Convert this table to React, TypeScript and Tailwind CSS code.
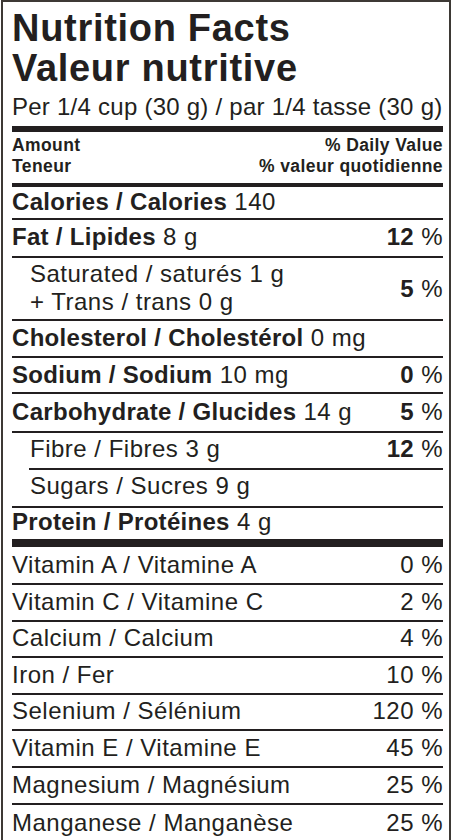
import clsx from 'clsx';

type RowProps = {
  name: string;
  amount?: string;
  dv?: string;
  strong?: boolean;
  dvStrong?: boolean;
  indent?: boolean;
  h: string;
  pb?: string;
};

function Row({ name, amount, dv, strong, dvStrong, indent, h, pb = 'pb-[6px]' }: RowProps) {
  return (
    <div className={clsx('flex items-end justify-between text-[24px] leading-[24px]', h, pb, indent && 'pl-[18px]')}>
      <span className="tracking-[0.5px] whitespace-nowrap">
        {strong ? <span className="font-bold tracking-[0.3px]">{name}</span> : name}
        {amount && ` ${amount}`}
      </span>
      {dv && (
        <span className="tracking-[0.5px] whitespace-nowrap">
          <span className={clsx(dvStrong && 'font-bold tracking-[0.3px]')}>{dv}</span> %
        </span>
      )}
    </div>
  );
}

function Rule({ indent }: { indent?: boolean }) {
  return <div className={clsx('h-[2px] bg-[#231f20]', indent && 'ml-[17px]')} />;
}

const vitamins = [
  { name: 'Vitamin A / Vitamine A', dv: '0', h: 'h-[36px]' },
  { name: 'Vitamin C / Vitamine C', dv: '2', h: 'h-[35px]' },
  { name: 'Calcium / Calcium', dv: '4', h: 'h-[34px]' },
  { name: 'Iron / Fer', dv: '10', h: 'h-[35px]' },
  { name: 'Selenium / Sélénium', dv: '120', h: 'h-[34px]' },
  { name: 'Vitamin E / Vitamine E', dv: '45', h: 'h-[35px]' },
  { name: 'Magnesium / Magnésium', dv: '25', h: 'h-[35px]' },
  { name: 'Manganese / Manganèse', dv: '25', h: 'h-[36px]' },
];

export default function App() {
  return (
    <div className="min-h-[840px] bg-white font-['Liberation_Sans',Arial,sans-serif] text-[#231f20]">
      <div className="ml-px w-[450px] border-2 border-[#3d3935] pl-[9px] pr-[6px]">
        {/* heading */}
        <div className="pt-[6px] text-[38px] leading-[40px] font-bold tracking-[0.7px]">
          <div>Nutrition Facts</div>
          <div>Valeur nutritive</div>
        </div>
        <div className="mt-[5px] text-[24px] leading-[28px] tracking-[0.25px] whitespace-nowrap">
          Per 1/4 cup (30 g) / par 1/4 tasse (30 g)
        </div>
        <div className="mt-[5px] h-[6px] bg-[#231f20]" />

        <div className="mt-[3px] flex justify-between text-[17.5px] leading-[21px] font-bold tracking-[0.4px]">
          <div>
            <div>Amount</div>
            <div>Teneur</div>
          </div>
          <div className="text-right">
            <div>% Daily Value</div>
            <div>% valeur quotidienne</div>
          </div>
        </div>
        <div className="mt-[6px] h-[4px] bg-[#231f20]" />

        <Row name="Calories / Calories" amount="140" strong h="h-[31px]" pb="pb-[4px]" />
        <Rule />
        <Row name="Fat / Lipides" amount="8 g" strong dv="12" dvStrong h="h-[36px]" pb="pb-[7px]" />
        <Rule />
        <div className="flex h-[61px] items-center justify-between pl-[18px] text-[24px]">
          <div className="self-end pb-[3px] leading-[28px] tracking-[0.5px] whitespace-nowrap">
            <div>Saturated / saturés 1 g</div>
            <div>+ Trans / trans 0 g</div>
          </div>
          <span className="leading-[24px] tracking-[0.5px]">
            <span className="font-bold">5</span> %
          </span>
        </div>
        <Rule />
        <Row name="Cholesterol / Cholestérol" amount="0 mg" strong h="h-[35px]" />
        <Rule />
        <Row name="Sodium / Sodium" amount="10 mg" strong dv="0" dvStrong h="h-[34px]" pb="pb-[5px]" />
        <Rule />
        <Row name="Carbohydrate / Glucides" amount="14 g" strong dv="5" dvStrong h="h-[37px]" pb="pb-[7px]" />
        <Rule />
        <Row name="Fibre / Fibres 3 g" dv="12" dvStrong indent h="h-[35px]" pb="pb-[7px]" />
        <Rule indent />
        <Row name="Sugars / Sucres 9 g" indent h="h-[36px]" pb="pb-[8px]" />
        <Rule />
        <Row name="Protein / Protéines" amount="4 g" strong h="h-[31px]" pb="pb-[5px]" />
        <div className="h-[8px] bg-[#231f20]" />

        {vitamins.map((v, i) => (
          <div key={v.name}>
            <Row name={v.name} dv={v.dv} h={v.h} />
            {i < vitamins.length - 1 && <Rule />}
          </div>
        ))}
      </div>
    </div>
  );
}
